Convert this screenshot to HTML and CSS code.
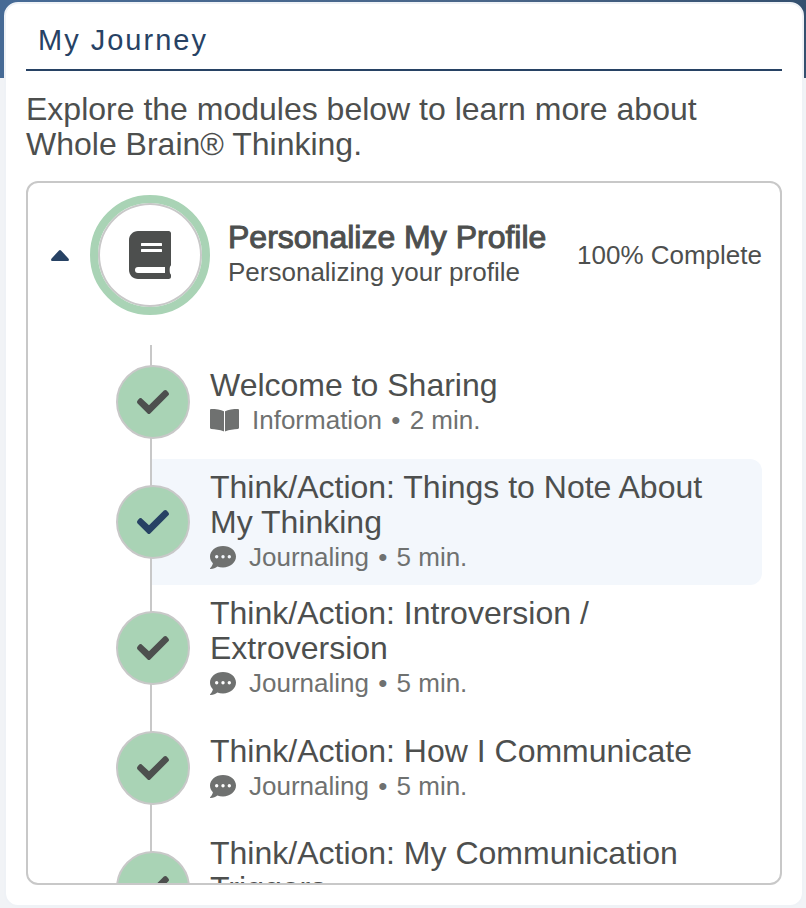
FILE: index.html
```html
<!DOCTYPE html>
<html lang="en">
<head>
  <meta charset="UTF-8">
  <meta name="viewport" content="width=device-width, initial-scale=1.0">
  <title>My Journey</title>
  <link rel="stylesheet" href="styles.css">
</head>
<body>

<!-- shared icons -->
<svg class="sprite" aria-hidden="true">
  <symbol id="icon-check" viewBox="0 0 32 24">
    <path fill="currentColor" d="M4.700 8.400 12 15.300 26.900.6c.8-.8 2-.8 2.800 0l1.700 1.900c.8.8.8 2 0 2.800L13.200 23.400c-.8.800-1.800.8-2.600 0L.6 13.400c-.8-.8-.8-2 0-2.800l1.600-2c.700-.700 1.700-.8 2.500-.2z"/>
  </symbol>
  <symbol id="icon-chat" viewBox="0 0 26 23">
    <path fill="currentColor" fill-rule="evenodd" d="M13 0C5.800 0 0 4.700 0 10.500c0 2.600 1.100 4.900 2.900 6.700C2.500 19.300 1.400 20.900.2 22c-.4.400-.1 1 .5 1 2.600 0 5-1.200 6.600-2.400 1.700.6 3.600.9 5.700.9 7.200 0 13-4.900 13-10.900S20.200 0 13 0zM6.700 9a1.700 1.700 0 1 1 0 3.400 1.700 1.700 0 0 1 0-3.400zM13 9a1.700 1.700 0 1 1 0 3.400A1.700 1.700 0 0 1 13 9zM19.300 9a1.700 1.700 0 1 1 0 3.400 1.700 1.700 0 0 1 0-3.400z"/>
  </symbol>
  <symbol id="icon-open-book" viewBox="0 0 29 23">
    <path fill="currentColor" d="M13.900 2.200C11 .6 5.500 0 1.200 0 .5 0 0 .5 0 1.200v17.500c0 .6.500 1.100 1.200 1.200 3.600.1 9 .8 12.200 2.400.3.200.6 0 .6-.4V2.600c0-.2 0-.3-.1-.4zM15.100 2.200C18 .6 23.500 0 27.800 0c.7 0 1.200.5 1.200 1.200v17.500c0 .6-.5 1.100-1.200 1.200-3.600.1-9 .8-12.200 2.400-.3.200-.6 0-.6-.4V2.600c0-.2 0-.3.100-.4z"/>
  </symbol>
</svg>

<div class="card">
  <h2 class="card-title">My Journey</h2>
  <p class="intro">Explore the modules below to learn more about Whole Brain® Thinking.</p>

  <div class="panel">
    <button class="module" type="button" aria-expanded="true">
      <svg class="caret" viewBox="0 0 18 11" aria-hidden="true">
        <path fill="currentColor" d="M8 .6 .6 8.400C-.5 9.600.2 11 1.400 11h15.200c1.200 0 1.900-1.400.8-2.600L10 .6C9.400-.1 8.600-.1 8 .6z"/>
      </svg>
      <span class="ring">
        <svg class="book" viewBox="0 0 42 48" aria-hidden="true">
          <path fill="currentColor" fill-rule="evenodd" d="M9 0h30.700C41 0 42 1 42 2.300v31.500c0 .8-.3 1.400-.9 1.800-.6 1.600-.6 5.200 0 6.800.6.500.9 1.100.9 1.800v1.500C42 47 41 48 39.700 48H9c-5 0-9-4-9-9V9c0-5 4-9 9-9zM12.600 12c-.3 0-.6.300-.6.600v1.800c0 .3.300.6.600.6h19.800c.3 0 .6-.3.600-.6v-1.800c0-.3-.3-.6-.6-.6zM12.600 18c-.3 0-.6.300-.6.600v1.800c0 .3.300.6.600.6h19.800c.3 0 .6-.3.600-.6v-1.800c0-.3-.3-.6-.6-.6zM9 36a3 3 0 0 0 0 6h27v-6z"/>
        </svg>
      </span>
      <span class="module-text">
        <span class="module-name">Personalize My Profile</span>
        <span class="module-desc">Personalizing your profile</span>
      </span>
      <span class="progress">100% Complete</span>
    </button>

    <ul class="steps">
      <li>
        <a class="step" href="#">
          <span class="dot"><svg class="check"><use href="#icon-check"/></svg></span>
          <span class="step-text">
            <span class="step-name">Welcome to Sharing</span>
            <span class="meta"><svg class="icon-book"><use href="#icon-open-book"/></svg><span>Information <span class="sep">•</span> 2 min.</span></span>
          </span>
        </a>
      </li>
      <li>
        <a class="step active" href="#">
          <span class="dot"><svg class="check"><use href="#icon-check"/></svg></span>
          <span class="step-text">
            <span class="step-name">Think/Action: Things to Note About My Thinking</span>
            <span class="meta"><svg class="icon-chat"><use href="#icon-chat"/></svg><span>Journaling <span class="sep">•</span> 5 min.</span></span>
          </span>
        </a>
      </li>
      <li>
        <a class="step" href="#">
          <span class="dot"><svg class="check"><use href="#icon-check"/></svg></span>
          <span class="step-text">
            <span class="step-name">Think/Action: Introversion / Extroversion</span>
            <span class="meta"><svg class="icon-chat"><use href="#icon-chat"/></svg><span>Journaling <span class="sep">•</span> 5 min.</span></span>
          </span>
        </a>
      </li>
      <li>
        <a class="step" href="#">
          <span class="dot"><svg class="check"><use href="#icon-check"/></svg></span>
          <span class="step-text">
            <span class="step-name">Think/Action: How I Communicate</span>
            <span class="meta"><svg class="icon-chat"><use href="#icon-chat"/></svg><span>Journaling <span class="sep">•</span> 5 min.</span></span>
          </span>
        </a>
      </li>
      <li>
        <a class="step" href="#">
          <span class="dot"><svg class="check"><use href="#icon-check"/></svg></span>
          <span class="step-text">
            <span class="step-name">Think/Action: My Communication Triggers</span>
            <span class="meta"><svg class="icon-chat"><use href="#icon-chat"/></svg><span>Journaling <span class="sep">•</span> 5 min.</span></span>
          </span>
        </a>
      </li>
    </ul>
  </div>
</div>

</body>
</html>
```

FILE: styles.css
```css
* {
  box-sizing: border-box;
}
body {
  margin: 0;
  height: 100vh;
  padding: 2px 2px 1px 4px;
  font-family: "Liberation Sans", Arial, sans-serif;
  font-size: 32px;
  line-height: 35px;
  color: #4d4f4e;
  background: linear-gradient(90deg, #466a95, #4a6689 60%, #34506f) top / 100% 78px no-repeat #f1f3f6;
}
.sprite {
  display: none;
}
.card {
  display: flex;
  flex-direction: column;
  height: 100%;
  padding: 0 20px 20px;
  background: white;
  border: 2px solid #eff2f6;
  border-radius: 14px;
}
.card-title {
  margin: 0;
  padding: 19px 12px 11px;
  font-size: 29px;
  font-weight: normal;
  letter-spacing: 2px;
  color: #274264;
  border-bottom: 2px solid #274264;
}
.intro {
  margin: 21px 0 19px;
}
.panel {
  flex: 1;
  min-height: 0;
  overflow-y: auto;
  scrollbar-width: none;
  border: 2px solid #c8c8c8;
  border-radius: 12px;
}

/* module header */
.module {
  display: flex;
  align-items: center;
  width: 100%;
  padding: 12px 18px 30px 23px;
  font: inherit;
  color: inherit;
  text-align: left;
  background: none;
  border: none;
  cursor: pointer;
}
.caret {
  width: 18px;
  height: 11px;
  margin-right: 21px;
  color: #274264;
}
.ring {
  display: flex;
  align-items: center;
  justify-content: center;
  flex-shrink: 0;
  width: 120px;
  height: 120px;
  margin-right: 18px;
  border: 8px solid #a9d3b5;
  border-radius: 50%;
  box-shadow: inset 0 0 0 2px #c8c8c8;
}
.book {
  width: 42px;
  height: 48px;
}
.module-text {
  flex: 1;
}
.module-name,
.module-desc {
  display: block;
}
.module-name {
  -webkit-text-stroke: 1px #4d4f4e;
}
.module-desc,
.progress {
  font-size: 26px;
}

/* timeline */
.steps {
  margin: 0 18px 0 122px;
  padding: 0;
  list-style: none;
}
.step {
  display: flex;
  align-items: center;
  color: inherit;
  text-decoration: none;
  border-left: 2px solid #c8c8c8;
}
.active {
  background: #f3f7fc;
  border-radius: 0 12px 12px 0;
}
.dot {
  display: flex;
  align-items: center;
  justify-content: center;
  flex-shrink: 0;
  width: 74px;
  height: 74px;
  margin: 20px 20px 20px -36px;
  background: #a9d3b5;
  border: 2px solid #c8c8c8;
  border-radius: 50%;
}
.check {
  width: 32px;
  height: 24px;
}
.active .check {
  color: #274264;
}
.step-text {
  flex: 1;
  padding: 11px 20px 10px 0;
}
.step-name {
  display: block;
}
.meta {
  display: flex;
  align-items: center;
  gap: 13px;
  font-size: 26px;
  color: #6f7170;
}
.sep {
  margin: 0 2px;
}
.icon-book {
  width: 29px;
  height: 23px;
}
.icon-chat {
  width: 26px;
  height: 23px;
}
```
